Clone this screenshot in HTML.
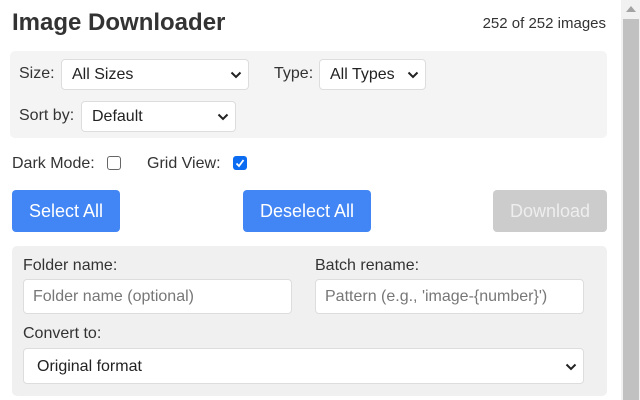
<!DOCTYPE html>
<html><head><style>
*{box-sizing:border-box;margin:0;padding:0}
body{width:640px;height:400px;overflow:hidden;background:#fff;font-family:"Liberation Sans",Arial,sans-serif;color:#333;position:relative}
.a{position:absolute}
.lbl{font-size:16px;color:#333;line-height:18px}
.sel{background:#fff;border:1px solid #ddd;border-radius:4px;font-size:16px;color:#222;padding-left:10px;line-height:29px}
.sel svg{position:absolute;right:6px;top:11px}
.btn{border-radius:4px;color:#fff;font-size:18px;text-align:center;line-height:43px;background:#4285f4}
.inp{background:#fff;border:1px solid #ddd;border-radius:4px;font-size:16px;color:#777;padding-left:9px;line-height:33px}
.cb{width:14px;height:14px;border-radius:3px}
</style></head><body>
<div class="a" style="left:12px;top:9px;font-size:24px;font-weight:bold;color:#333">Image Downloader</div>
<div class="a" style="right:34px;top:15px;font-size:15px;color:#333">252 of 252 images</div>

<div class="a" style="left:10px;top:51px;width:597px;height:87px;background:#f4f4f4;border-radius:5px"></div>
<div class="a lbl" style="left:19px;top:65px">Size:</div>
<div class="a sel" style="left:61px;top:59px;width:188px;height:31px">All Sizes<svg width="12" height="8" viewBox="0 0 12 8"><path d="M1.5 1.5L6 6l4.5-4.5" stroke="#222" stroke-width="2" fill="none"/></svg></div>
<div class="a lbl" style="left:274px;top:65px">Type:</div>
<div class="a sel" style="left:319px;top:59px;width:107px;height:31px">All Types<svg width="12" height="8" viewBox="0 0 12 8"><path d="M1.5 1.5L6 6l4.5-4.5" stroke="#222" stroke-width="2" fill="none"/></svg></div>
<div class="a lbl" style="left:19px;top:107px">Sort by:</div>
<div class="a sel" style="left:81px;top:101px;width:155px;height:31px">Default<svg width="12" height="8" viewBox="0 0 12 8"><path d="M1.5 1.5L6 6l4.5-4.5" stroke="#222" stroke-width="2" fill="none"/></svg></div>

<div class="a lbl" style="left:12px;top:155px">Dark Mode:</div>
<div class="a cb" style="left:107px;top:156px;border:1.5px solid #666"></div>
<div class="a lbl" style="left:147px;top:155px">Grid View:</div>
<div class="a cb" style="left:233px;top:156px;background:#0b6cf2"><svg width="14" height="14" viewBox="0 0 14 14"><path d="M3.5 7.5l2.5 2.5 4.5-6" stroke="#fff" stroke-width="1.8" fill="none"/></svg></div>

<div class="a btn" style="left:12px;top:190px;width:108px;height:42px">Select All</div>
<div class="a btn" style="left:243px;top:190px;width:128px;height:42px">Deselect All</div>
<div class="a btn" style="left:493px;top:190px;width:114px;height:42px;background:#ccc;color:#eee">Download</div>

<div class="a" style="left:12px;top:246px;width:595px;height:150px;background:#f0f0f0;border-radius:5px"></div>
<div class="a lbl" style="left:23px;top:257px">Folder name:</div>
<div class="a inp" style="left:23px;top:279px;width:269px;height:35px">Folder name (optional)</div>
<div class="a lbl" style="left:315px;top:257px">Batch rename:</div>
<div class="a inp" style="left:315px;top:279px;width:269px;height:35px">Pattern (e.g., 'image-{number}')</div>
<div class="a lbl" style="left:23px;top:325px">Convert to:</div>
<div class="a sel" style="left:23px;top:348px;width:561px;height:36px;line-height:35px;padding-left:13px">Original format<svg width="12" height="8" viewBox="0 0 12 8" style="top:14px"><path d="M1.5 1.5L6 6l4.5-4.5" stroke="#222" stroke-width="2" fill="none"/></svg></div>

<div class="a" style="left:621px;top:0;width:19px;height:400px;background:#f1f1f1"></div>
<div class="a" style="left:623px;top:19px;width:16px;height:381px;background:#c1c1c1"></div>
<svg class="a" style="left:626px;top:6px" width="10" height="6" viewBox="0 0 10 6"><path d="M0 6L5 0l5 6z" fill="#a3a3a3"/></svg>
</body></html>
